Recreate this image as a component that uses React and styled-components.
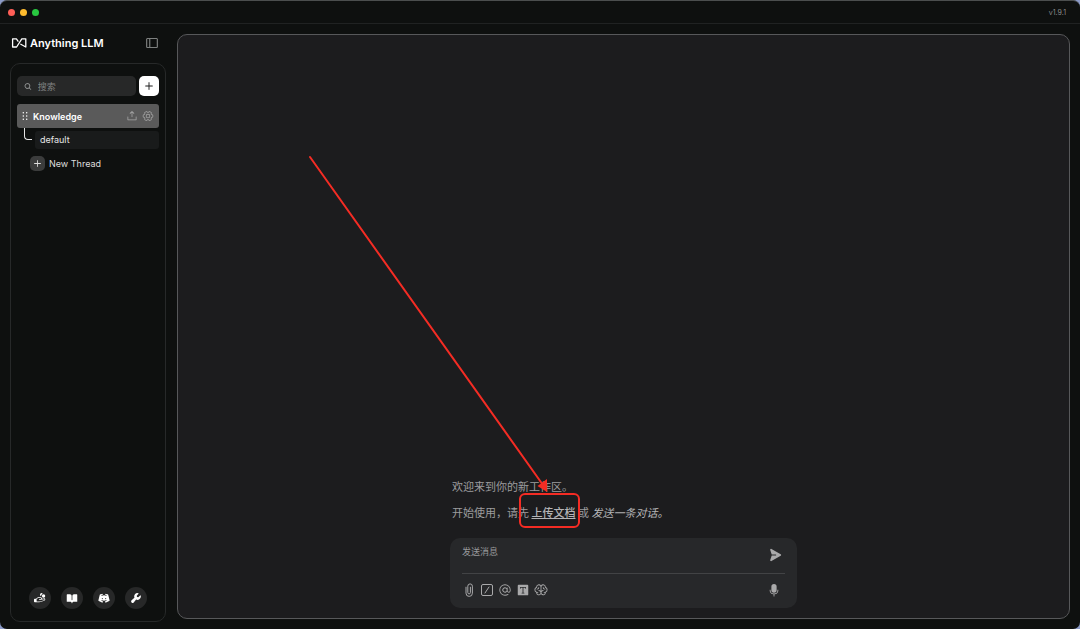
import styled, { createGlobalStyle } from 'styled-components';
import {
  PiAt,
  PiBookOpenFill,
  PiBrain,
  PiDiscordLogoFill,
  PiDotsSixVerticalBold,
  PiGearSix,
  PiHandCoinsFill,
  PiMagnifyingGlassBold,
  PiMicrophoneFill,
  PiPaperPlaneRightFill,
  PiPlusBold,
  PiSidebarSimple,
  PiTextTFill,
  PiUploadSimple,
  PiWrenchFill,
} from 'react-icons/pi';

const footerLinks = [
  { label: 'Sponsor', Icon: PiHandCoinsFill },
  { label: 'Docs', Icon: PiBookOpenFill },
  { label: 'Discord', Icon: PiDiscordLogoFill },
  { label: 'Settings', Icon: PiWrenchFill },
];

function Logo() {
  return (
    <svg width='16' height='12' viewBox='0 0 16 12' fill='none' aria-hidden='true'>
      <path
        d='M7 4.200 5.400 1.800H1.600v8.200h4L10.800 1.800h4v8.200L9.800 7.200'
        stroke='currentColor'
        strokeWidth='1.300'
        strokeLinejoin='round'
        strokeLinecap='round'
      />
    </svg>
  );
}

function PaperclipIcon() {
  return (
    <svg width='14' height='14' viewBox='0 0 14 14' fill='none' aria-hidden='true'>
      <path
        d='M8.400 4.200v5.400a1.300 1.300 0 0 1-2.600 0V3.200a2.300 2.300 0 0 1 4.600 0v7a3.200 3.200 0 0 1-6.400 0V4.200'
        stroke='currentColor'
        strokeLinecap='round'
      />
    </svg>
  );
}

function SlashIcon() {
  return (
    <svg width='14' height='14' viewBox='0 0 14 14' fill='none' aria-hidden='true'>
      <rect x='1.500' y='1.500' width='11' height='11' rx='1.500' stroke='currentColor' />
      <path d='M5 10 9 4' stroke='currentColor' strokeLinecap='round' />
    </svg>
  );
}

function Sidebar() {
  return (
    <SidebarWrapper>
      <Brand>
        <Logo />
        <BrandName>Anything LLM</BrandName>
        <IconButton type='button' aria-label='Toggle sidebar' $size={14} $color='#a3a5a5'>
          <PiSidebarSimple />
        </IconButton>
      </Brand>
      <SidebarPanel>
        <SearchRow>
          <SearchField>
            <PiMagnifyingGlassBold />
            <input type='text' placeholder='搜索' aria-label='搜索' />
          </SearchField>
          <NewWorkspaceButton type='button' aria-label='New workspace'>
            <PiPlusBold />
          </NewWorkspaceButton>
        </SearchRow>
        <WorkspaceRow>
          <PiDotsSixVerticalBold />
          <a href='#knowledge'>Knowledge</a>
          <IconButton type='button' aria-label='Upload' $size={12} $color='#a8a8a8'>
            <PiUploadSimple />
          </IconButton>
          <IconButton type='button' aria-label='Workspace settings' $size={12} $color='#a8a8a8'>
            <PiGearSix />
          </IconButton>
        </WorkspaceRow>
        <ThreadRow>
          <ThreadElbow />
          <ThreadLink href='#default'>default</ThreadLink>
        </ThreadRow>
        <NewThreadButton type='button'>
          <span>
            <PiPlusBold />
          </span>
          New Thread
        </NewThreadButton>
        <SidebarFooter>
          {footerLinks.map(({ label, Icon }) => (
            <FooterLink key={label} href={`#${label.toLowerCase()}`} aria-label={label}>
              <Icon />
            </FooterLink>
          ))}
        </SidebarFooter>
      </SidebarPanel>
    </SidebarWrapper>
  );
}

function PromptInput() {
  return (
    <PromptForm>
      <PromptTop>
        <textarea rows='1' placeholder='发送消息' aria-label='发送消息' />
        <IconButton type='button' aria-label='Send' $size={14} $color='#a9a9aa'>
          <PiPaperPlaneRightFill />
        </IconButton>
      </PromptTop>
      <PromptTools>
        <IconButton type='button' aria-label='Attach file' $size={14} $color='#a9a9aa'>
          <PaperclipIcon />
        </IconButton>
        <IconButton type='button' aria-label='Slash commands' $size={14} $color='#a9a9aa'>
          <SlashIcon />
        </IconButton>
        <IconButton type='button' aria-label='Agents' $size={14} $color='#a9a9aa'>
          <PiAt />
        </IconButton>
        <IconButton type='button' aria-label='Text size' $size={14} $color='#a9a9aa'>
          <PiTextTFill />
        </IconButton>
        <IconButton type='button' aria-label='Model' $size={14} $color='#a9a9aa'>
          <PiBrain />
        </IconButton>
        <IconButton type='button' aria-label='Microphone' $size={14} $color='#a9a9aa'>
          <PiMicrophoneFill />
        </IconButton>
      </PromptTools>
    </PromptForm>
  );
}

export default function App() {
  return (
    <>
      <GlobalStyle />
      <Window>
        <TitleBar>
          <TrafficLight $color='#ff5f57' />
          <TrafficLight $color='#febc2e' />
          <TrafficLight $color='#28c840' />
          <Version>v1.9.1</Version>
        </TitleBar>
        <Content>
          <Sidebar />
          <ChatPanel>
            <ChatColumn>
              <Welcome>
                <p>欢迎来到你的新工作区。</p>
                <p>
                  开始使用，请先{' '}
                  <UploadTarget>
                    <a href='#upload'>上传文档</a>
                    <Callout>
                      <svg width='242' height='340' viewBox='0 0 242 340' aria-hidden='true'>
                        <path d='M2 2 235 330' stroke='#f42c24' strokeWidth='2' strokeLinecap='round' />
                        <path d='M239 337 229.500 331 239 324Z' fill='#f42c24' />
                      </svg>
                    </Callout>
                  </UploadTarget>{' '}
                  或 <em>发送一条对话。</em>
                </p>
              </Welcome>
              <PromptInput />
            </ChatColumn>
          </ChatPanel>
        </Content>
      </Window>
    </>
  );
}

const GlobalStyle = createGlobalStyle`
  * {
    box-sizing: border-box;
  }

  body {
    margin: 0;
    background: #8c9bc8;
    color: #fff;
    font-family: Inter, 'Noto Sans CJK SC', sans-serif;
  }

  button,
  input,
  textarea {
    border: none;
    padding: 0;
    background: none;
    color: inherit;
    font: inherit;
    outline: none;
  }

  a {
    color: inherit;
    text-decoration: none;
  }

  p {
    margin: 0;
  }
`;

const Window = styled.div`
  display: flex;
  flex-direction: column;
  min-height: 100vh;
  background: #0e100f;
  border-top: 1px solid #4b4e4e;
  border-radius: 7px;
  overflow: hidden;
`;

const TitleBar = styled.header`
  display: flex;
  align-items: center;
  gap: 5px;
  height: 23px;
  padding: 0 14px 0 8px;
  border-bottom: 1px solid #202222;
`;

const TrafficLight = styled.span`
  width: 7px;
  height: 7px;
  border-radius: 50%;
  background: ${({ $color }) => $color};
`;

const Version = styled.span`
  margin-left: auto;
  font-size: 7px;
  color: #8b8d8d;
`;

const Content = styled.div`
  display: flex;
  flex: 1;
  gap: 11px;
  padding: 10px;
`;

const SidebarWrapper = styled.aside`
  display: flex;
  flex-direction: column;
  flex: 0 0 156px;
  margin-bottom: -3px;
`;

const Brand = styled.div`
  display: flex;
  align-items: center;
  gap: 3px;
  height: 18px;
  margin-bottom: 11px;
  padding: 0 7px 0 1px;

  button {
    margin-left: auto;
  }
`;

const BrandName = styled.span`
  font-size: 11px;
  font-weight: 600;
`;

const IconButton = styled.button`
  display: flex;
  align-items: center;
  justify-content: center;
  flex: none;
  color: ${({ $color }) => $color};
  font-size: ${({ $size }) => $size}px;
  cursor: pointer;
`;

const SidebarPanel = styled.nav`
  display: flex;
  flex-direction: column;
  flex: 1;
  padding: 12px 6px;
  border: 1px solid #272929;
  border-radius: 10px;
`;

const SearchRow = styled.div`
  display: flex;
  gap: 3px;
  height: 20px;
  margin-bottom: 8px;
`;

const SearchField = styled.label`
  display: flex;
  align-items: center;
  gap: 6px;
  flex: 1;
  min-width: 0;
  padding: 0 7px;
  border-radius: 5px;
  background: #272828;
  color: #a0a2a2;
  font-size: 9px;

  input {
    width: 100%;
    min-width: 0;
  }

  input::placeholder {
    color: #808282;
  }
`;

const NewWorkspaceButton = styled.button`
  display: flex;
  align-items: center;
  justify-content: center;
  width: 20px;
  border-radius: 5px;
  background: #fff;
  color: #1b1b1b;
  font-size: 10px;
`;

const WorkspaceRow = styled.div`
  display: flex;
  align-items: center;
  gap: 4px;
  height: 24px;
  padding: 0 5px 0 2px;
  border-radius: 3px;
  background: #5a5a5a;
  font-size: 12px;

  a {
    margin-left: -2px;
    flex: 1;
    font-size: 9px;
    font-weight: 600;
  }
`;

const ThreadRow = styled.div`
  display: flex;
  margin-bottom: 7px;
  padding-left: 7px;
`;

const ThreadElbow = styled.span`
  width: 8px;
  height: 12px;
  margin-right: 3px;
  border-left: 1px solid #e5e5e5;
  border-bottom: 1px solid #e5e5e5;
  border-bottom-left-radius: 4px;
`;

const ThreadLink = styled.a`
  flex: 1;
  height: 18px;
  margin-top: 3px;
  padding-left: 5px;
  border-radius: 3px;
  background: #191b1b;
  color: #e6e6e6;
  font-size: 9px;
  line-height: 18px;
`;

const NewThreadButton = styled.button`
  display: flex;
  align-items: center;
  gap: 4px;
  padding-left: 13px;
  color: #dedede;
  font-size: 9px;
  line-height: 15px;

  span {
    display: flex;
    align-items: center;
    justify-content: center;
    width: 15px;
    height: 15px;
    border-radius: 5px;
    background: #3b3c3c;
    font-size: 9px;
  }
`;

const SidebarFooter = styled.div`
  display: flex;
  justify-content: center;
  gap: 10px;
  margin-top: auto;
`;

const FooterLink = styled.a`
  display: flex;
  align-items: center;
  justify-content: center;
  width: 22px;
  height: 22px;
  border-radius: 50%;
  background: #272828;
  font-size: 12px;
`;

const ChatPanel = styled.main`
  display: flex;
  flex-direction: column;
  justify-content: flex-end;
  align-items: center;
  flex: 1;
  padding: 10px;
  border: 1px solid #57585a;
  border-radius: 10px;
  background: #1c1c1e;
`;

const ChatColumn = styled.div`
  width: 100%;
  max-width: 347px;
`;

const Welcome = styled.div`
  display: grid;
  gap: 10px;
  margin-bottom: 18px;
  padding-left: 2px;
  color: #9c9c9e;
  font-family: 'Noto Sans CJK SC', sans-serif;
  font-size: 11px;
  line-height: 16px;

  em {
    color: #b4b4b6;
  }
`;

const UploadTarget = styled.span`
  position: relative;

  a {
    color: #b4b4b6;
    font-weight: 500;
    text-decoration: underline;
  }
`;

/* red box around the upload link, the arrow ends on its top edge */
const Callout = styled.span`
  position: absolute;
  inset: -11px -5px -8px -12px;
  border: 2px solid #f42c24;
  border-radius: 6px;
  pointer-events: none;

  svg {
    position: absolute;
    right: 28px;
    bottom: 100%;
  }
`;

const PromptForm = styled.form`
  padding: 0 12px;
  border-radius: 10px;
  background: #27282a;
`;

const PromptTop = styled.div`
  display: flex;
  align-items: center;
  height: 36px;
  padding: 0 3px 2px 0;
  border-bottom: 1px solid #424345;

  textarea {
    flex: 1;
    height: 20px;
    font-size: 9px;
    line-height: 14px;
    resize: none;
  }

  textarea::placeholder {
    color: #98999b;
  }
`;

const PromptTools = styled.div`
  display: flex;
  align-items: center;
  gap: 4px;
  height: 34px;
  padding: 0 4px 2px 0;

  button:last-child {
    margin-left: auto;
  }
`;
